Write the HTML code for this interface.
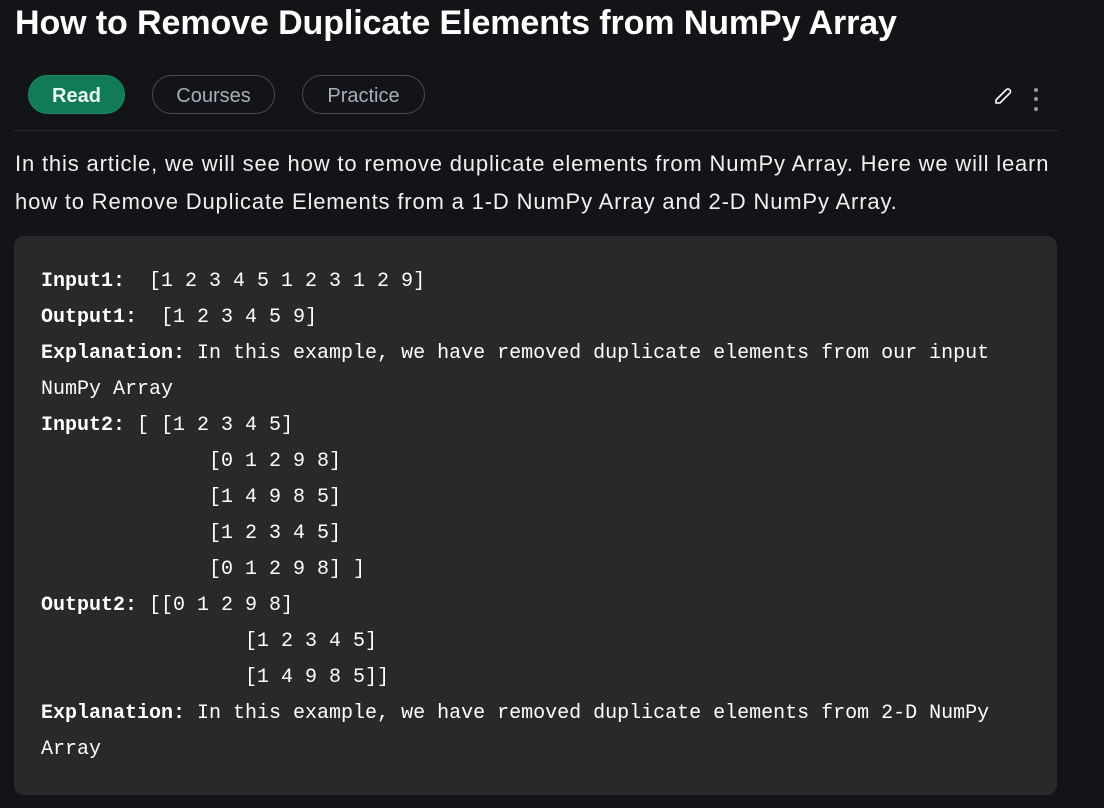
<!DOCTYPE html>
<html><head><style>
body{margin:0;width:1104px;height:808px;background:#131417;overflow:hidden;font-family:"Liberation Sans",sans-serif;color:#fff;position:relative}
h1{position:absolute;left:15px;top:1px;margin:0;font-size:34px;font-weight:bold;line-height:44px;letter-spacing:-0.1px}
.btn{position:absolute;top:75px;height:39px;border-radius:20px;box-sizing:border-box;font-size:20px;line-height:40px;text-align:center}
.read{left:28px;width:97px;background:#117a57;border:1px solid #1c8a63;font-weight:bold;color:#eaf5ef}
.out{border:1px solid #4a4b50;color:#a9adb8}
hr{position:absolute;left:14px;top:130px;width:1044px;margin:0;border:0;border-top:1px solid #2c2d31}
p{position:absolute;left:15px;top:145px;margin:0;font-size:22px;letter-spacing:0.84px;line-height:38px;width:1085px;color:#f0f0f0;white-space:nowrap}
.code{position:absolute;left:14px;top:236px;width:1043px;height:559px;background:#29292b;border-radius:10px}
pre{margin:0;position:absolute;left:41px;top:264px;font-family:"Liberation Mono",monospace;font-size:20px;line-height:36px;color:#fff}
b{font-weight:bold}
</style></head><body>
<h1>How to Remove Duplicate Elements from NumPy Array</h1>
<div class="btn read">Read</div>
<div class="btn out" style="left:152px;width:123px">Courses</div>
<div class="btn out" style="left:302px;width:123px">Practice</div>
<svg style="position:absolute;left:994px;top:86px" width="20" height="20" viewBox="0 0 20 20"><path d="M2 14 L12 4 A2 2 0 0 1 16 7 L6 17 L2 17 Z" fill="none" stroke="#fff" stroke-width="1.6"/></svg>
<div style="position:absolute;left:1034px;top:88px;width:4px;height:4px;border-radius:2px;background:#999"></div>
<div style="position:absolute;left:1034px;top:97px;width:4px;height:4px;border-radius:2px;background:#999"></div>
<div style="position:absolute;left:1034px;top:107px;width:4px;height:4px;border-radius:2px;background:#999"></div>
<hr>
<p>In this article, we will see how to remove duplicate elements from NumPy Array. Here we will learn<br>how to Remove Duplicate Elements from a 1-D NumPy Array and 2-D NumPy Array.</p>
<div class="code"></div>
<pre><b>Input1:</b>  [1 2 3 4 5 1 2 3 1 2 9]
<b>Output1:</b>  [1 2 3 4 5 9]
<b>Explanation:</b> In this example, we have removed duplicate elements from our input
NumPy Array
<b>Input2:</b> [ [1 2 3 4 5]
              [0 1 2 9 8]
              [1 4 9 8 5]
              [1 2 3 4 5]
              [0 1 2 9 8] ]
<b>Output2:</b> [[0 1 2 9 8]
                 [1 2 3 4 5]
                 [1 4 9 8 5]]
<b>Explanation:</b> In this example, we have removed duplicate elements from 2-D NumPy
Array</pre>
</body></html>
